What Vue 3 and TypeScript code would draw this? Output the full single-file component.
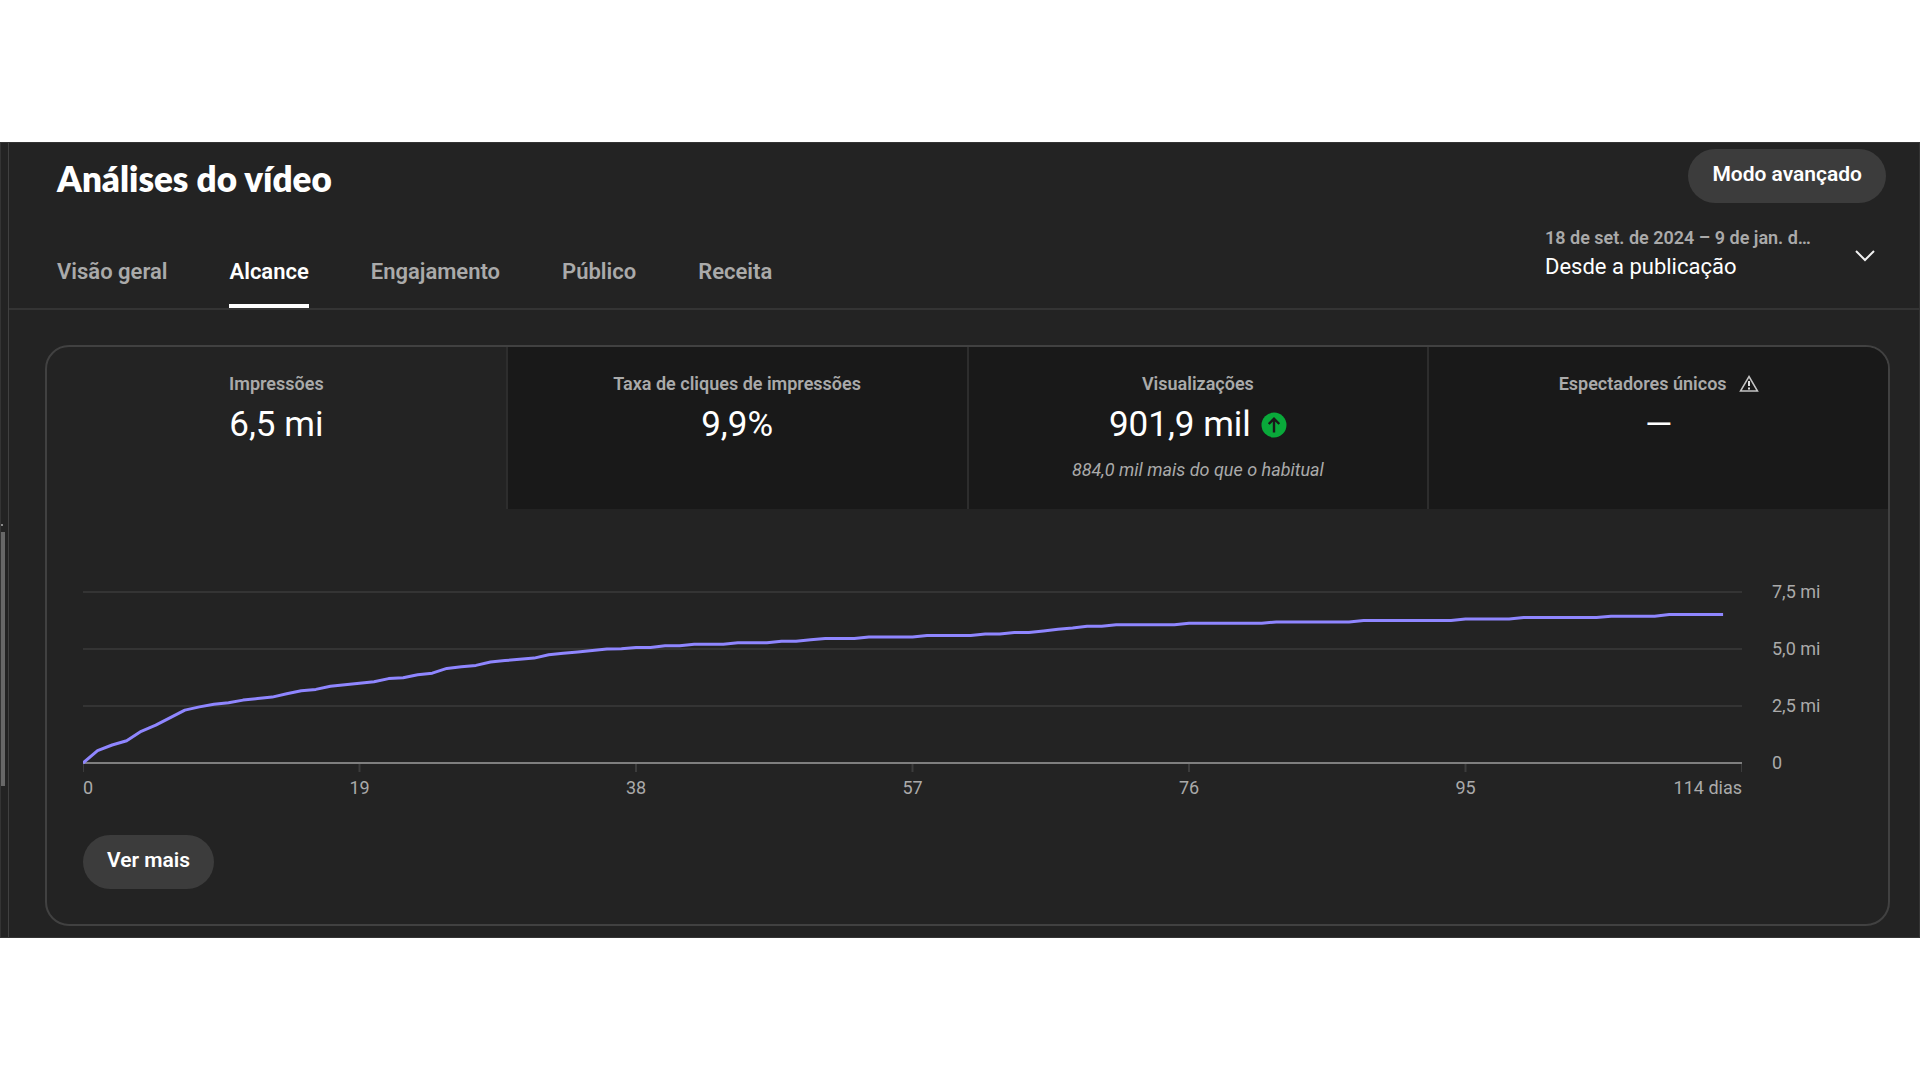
<script setup lang="ts">
import { ref } from 'vue'

interface Metric {
  label: string
  value: string
  note?: string
  rising?: boolean
  warning?: boolean
}

const tabs: string[] = ['Visão geral', 'Alcance', 'Engajamento', 'Público', 'Receita']
const activeTab = ref('Alcance')

const metrics: Metric[] = [
  { label: 'Impressões', value: '6,5 mi' },
  { label: 'Taxa de cliques de impressões', value: '9,9%' },
  { label: 'Visualizações', value: '901,9 mil', note: '884,0 mil mais do que o habitual', rising: true },
  { label: 'Espectadores únicos', value: '—', warning: true },
]
const activeMetric = ref('Impressões')

// Accumulated impressions, in millions: [value, number of days it holds]
const runs: [number, number][] = [
  [0, 1], [0.54, 1], [0.79, 1], [0.98, 1], [1.39, 1], [1.66, 1], [1.99, 1], [2.32, 1], [2.46, 1],
  [2.58, 1], [2.64, 1], [2.76, 1], [2.83, 1], [2.89, 1], [3.04, 1], [3.17, 1], [3.23, 1], [3.37, 1],
  [3.43, 1], [3.5, 1], [3.56, 1], [3.7, 1], [3.74, 1], [3.87, 1], [3.94, 1], [4.15, 1], [4.22, 1],
  [4.28, 1], [4.43, 1], [4.49, 1], [4.55, 1], [4.6, 1], [4.75, 1], [4.81, 1], [4.87, 1], [4.94, 1],
  [5, 1], [5.01, 1], [5.07, 2], [5.14, 2], [5.21, 3], [5.27, 3], [5.34, 2], [5.41, 1], [5.46, 3],
  [5.53, 4], [5.59, 4], [5.66, 2], [5.72, 2], [5.79, 1], [5.87, 1], [5.92, 1], [6, 2], [6.06, 5],
  [6.13, 6], [6.19, 6], [6.25, 7], [6.31, 4], [6.38, 6], [6.44, 4], [6.51, 4],
]
const lastDay = 112.7

const gridStep = 57
const top = 28
const base = top + 3 * gridStep
const yOf = (value: number): number => base - (value / 2.5) * gridStep

const values = runs.flatMap(([value, days]) => Array<number>(days).fill(value))
const points = [...values.map((v, day) => [day, yOf(v)]), [lastDay, yOf(6.51)]]
  .map(([x, y]) => `${x},${y.toFixed(1)}`)
  .join(' ')

const gridLines = [top, top + gridStep, top + 2 * gridStep]
const yLabels = ['7,5 mi', '5,0 mi', '2,5 mi', '0']
const ticks = [0, 19, 38, 57, 76, 95, 114]
const xLabels = ['0', '19', '38', '57', '76', '95', '114 dias']
</script>

<template>
  <div class="page">
    <div class="panel">
      <aside class="rail" aria-hidden="true">
        <span class="rail-arrow"></span>
        <span class="rail-thumb"></span>
      </aside>

      <main class="main">
        <header class="header">
          <div class="title-row">
            <h1 class="title">Análises do vídeo</h1>
            <button type="button" class="pill">Modo avançado</button>
          </div>
          <div class="nav-row">
            <nav class="tabs">
              <button
                v-for="tab in tabs"
                :key="tab"
                type="button"
                class="tab"
                :class="{ active: tab === activeTab }"
                @click="activeTab = tab"
              >
                {{ tab }}
              </button>
            </nav>
            <button type="button" class="period" aria-haspopup="listbox">
              <span class="period-text">
                <span class="period-range">18 de set. de 2024 – 9 de jan. d…</span>
                <span class="period-name">Desde a publicação</span>
              </span>
              <svg class="chevron" viewBox="0 0 20 12" width="20" height="12" aria-hidden="true">
                <path d="M1 1 L10 10 L19 1" fill="none" stroke="#f1f1f1" stroke-width="2" />
              </svg>
            </button>
          </div>
        </header>

        <section class="card">
          <div class="metrics">
            <button
              v-for="metric in metrics"
              :key="metric.label"
              type="button"
              class="metric"
              :class="{ active: metric.label === activeMetric }"
              @click="activeMetric = metric.label"
            >
              <span class="metric-label">
                {{ metric.label }}
                <svg v-if="metric.warning" viewBox="0 0 20 18" width="20" height="18" aria-hidden="true">
                  <path d="M10 1.500 L18.500 16 H1.500 Z" fill="none" stroke="#c4c4c4" stroke-width="1.500" />
                  <path d="M10 6 V11 M10 12.500 V14.500" fill="none" stroke="#dedede" stroke-width="2" />
                </svg>
              </span>
              <span class="metric-value">
                {{ metric.value }}
                <svg v-if="metric.rising" viewBox="0 0 26 26" width="26" height="26" aria-hidden="true">
                  <circle cx="13" cy="13" r="12.500" fill="#09a93a" />
                  <path d="M13 20.500 V7 M7.700 12 L13 6.700 L18.300 12" fill="none" stroke="#191919" stroke-width="2.400" />
                </svg>
              </span>
              <span v-if="metric.note" class="metric-note">{{ metric.note }}</span>
            </button>
          </div>

          <div class="chart">
            <div class="plot">
              <svg class="plot-lines" viewBox="0 0 114 228" preserveAspectRatio="none" role="img" aria-label="Impressões">
                <line v-for="y in gridLines" :key="y" class="grid" x1="0" x2="114" :y1="y" :y2="y" />
                <line v-for="x in ticks" :key="x" class="tick" :x1="x" :x2="x" :y1="base" :y2="base + 9" />
                <line class="base" x1="0" x2="114" :y1="base" :y2="base" />
                <polyline class="series" :points="points" />
              </svg>
              <div class="y-axis">
                <span v-for="label in yLabels" :key="label">{{ label }}</span>
              </div>
            </div>
            <div class="x-axis">
              <span v-for="label in xLabels" :key="label">{{ label }}</span>
            </div>
          </div>

          <button type="button" class="pill more">Ver mais</button>
        </section>
      </main>
    </div>
  </div>
</template>

<style>
body {
  margin: 0;
  background: #fff;
}
</style>

<style scoped>
.page {
  min-height: 100vh;
  display: flex;
  align-items: center;
  font-family: Roboto, 'Liberation Sans', sans-serif;
  color: #fff;
}

.panel {
  flex: 1;
  min-width: 0;
  display: flex;
  box-sizing: border-box;
  border: 1px solid #343434;
  background: #232323;
}

button {
  margin: 0;
  padding: 0;
  border: 0;
  background: none;
  color: inherit;
  font: inherit;
  cursor: pointer;
}

.rail {
  width: 7px;
  flex: none;
  display: flex;
  flex-direction: column;
  border-right: 1px solid #404040;
}

.rail-arrow {
  width: 2px;
  height: 2px;
  margin-top: 381px;
  background: #8a8a8a;
}

.rail-thumb {
  width: 4px;
  height: 254px;
  margin-top: 6px;
  background: #686868;
}

.main {
  flex: 1;
  min-width: 0;
  padding-bottom: 11px;
}

.header {
  padding: 6px 33px 0 48px;
  border-bottom: 2px solid #343434;
}

.title-row {
  display: flex;
  justify-content: space-between;
  align-items: flex-start;
}

.title {
  margin: 0;
  padding-top: 7px;
  font-family: Lato, 'Noto Sans', sans-serif;
  font-size: 35px;
  line-height: 44px;
  font-weight: 800;
}

.pill {
  height: 54px;
  padding: 0 24px 4px;
  border-radius: 27px;
  background: #3c3c3c;
  font-size: 21px;
  line-height: 50px;
  font-weight: 600;
}

.nav-row {
  display: flex;
  justify-content: space-between;
}

.tabs {
  display: flex;
  gap: 62px;
}

.tab {
  height: 105px;
  padding-top: 36px;
  box-sizing: border-box;
  border-bottom: 4px solid transparent;
  color: #aaa;
  font-size: 22px;
  line-height: 28px;
  font-weight: 600;
}

.tab.active {
  color: #fff;
  border-bottom-color: #fff;
}

.period {
  display: flex;
  align-items: center;
  gap: 36px;
  height: 100px;
  padding-right: 11px;
  text-align: left;
}

.period-text {
  width: 274px;
  display: flex;
  flex-direction: column;
  white-space: nowrap;
}

.period-range {
  color: #aaa;
  font-size: 18px;
  line-height: 28px;
  font-weight: 600;
}

.period-name {
  font-size: 22px;
  line-height: 30px;
}

.chevron {
  margin-top: 6px;
}

.card {
  margin: 35px 29px 0 36px;
  border: 2px solid #414141;
  border-radius: 24px;
  overflow: hidden;
}

.metrics {
  display: flex;
}

.metric {
  flex: 1 1 0;
  height: 162px;
  padding-top: 23px;
  box-sizing: border-box;
  display: flex;
  flex-direction: column;
  align-items: center;
  border-left: 2px solid #2d2d2d;
  background: #191919;
}

.metric:first-child {
  border-left: 0;
}

.metric.active {
  background: none;
}

.metric-label {
  display: flex;
  align-items: center;
  gap: 12px;
  color: #aaa;
  font-size: 18px;
  line-height: 28px;
  font-weight: 600;
}

.metric-value {
  display: flex;
  align-items: center;
  gap: 10px;
  font-size: 35px;
  line-height: 54px;
}

.metric-note {
  margin-top: 4px;
  color: #aaa;
  font-size: 18px;
  line-height: 28px;
  font-style: italic;
}

.chart {
  margin-top: 55px;
  padding: 0 36px;
  color: #aaa;
  font-size: 18px;
}

.plot {
  display: flex;
  gap: 30px;
}

.plot-lines {
  flex: 1;
  min-width: 0;
  height: 228px;
}

.plot-lines * {
  vector-effect: non-scaling-stroke;
}

.grid {
  stroke: #343434;
  stroke-width: 2px;
}

.tick {
  stroke: #3c3c3c;
  stroke-width: 2px;
}

.base {
  stroke: #7f7f7f;
  stroke-width: 2px;
}

.series {
  fill: none;
  stroke: #8f86ff;
  stroke-width: 3px;
  stroke-linejoin: round;
}

.y-axis {
  width: 80px;
  display: flex;
  flex-direction: column;
  margin-top: -1px;
  line-height: 57px;
}

.x-axis {
  display: grid;
  grid-template-columns: repeat(12, 1fr);
  margin: -18px 110px 0 0;
  line-height: 28px;
  text-align: center;
}

.x-axis span {
  grid-column: span 2;
}

.x-axis span:first-child {
  grid-column: span 1;
  text-align: left;
}

.x-axis span:last-child {
  grid-column: span 1;
  text-align: right;
  white-space: nowrap;
}

.more {
  margin: 33px 0 35px 36px;
}
</style>
